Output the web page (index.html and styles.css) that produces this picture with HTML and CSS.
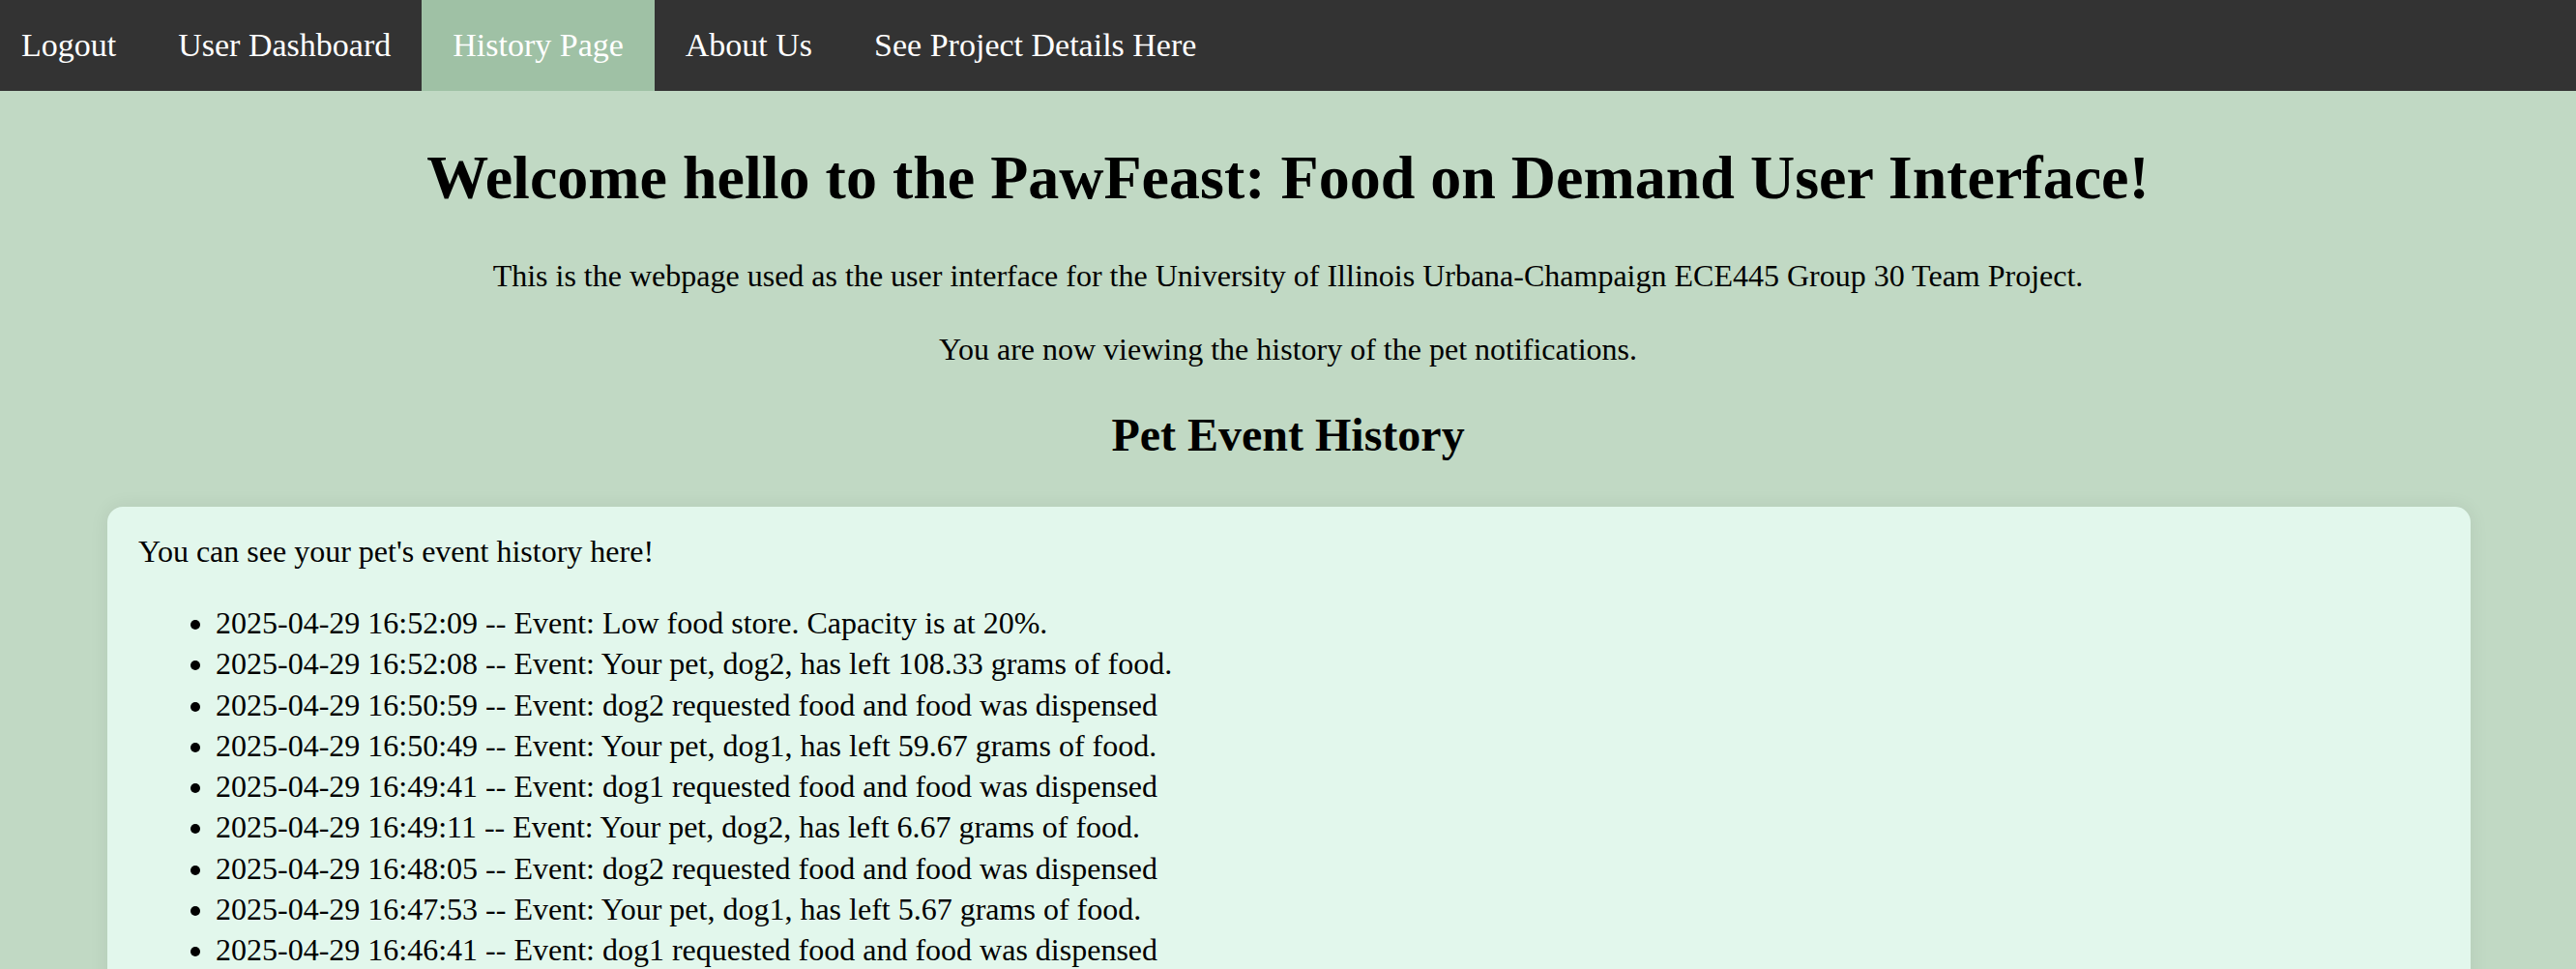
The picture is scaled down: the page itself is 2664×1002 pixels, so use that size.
FILE: index.html
```html
<!DOCTYPE html>
<html lang="en">
<head>
<meta charset="utf-8">
<title>PawFeast History</title>
<link rel="stylesheet" href="styles.css">
</head>
<body>
<nav class="topnav">
  <a class="nav-link nav-first" href="#">Logout</a>
  <a class="nav-link" href="#">User Dashboard</a>
  <a class="nav-link active" href="#">History Page</a>
  <a class="nav-link" href="#">About Us</a>
  <a class="nav-link" href="#">See Project Details Here</a>
</nav>
<main class="content">
  <h1 class="title">Welcome hello to the PawFeast: Food on Demand User Interface!</h1>
  <p class="intro">This is the webpage used as the user interface for the University of Illinois Urbana-Champaign ECE445 Group 30 Team Project.</p>
  <p class="intro">You are now viewing the history of the pet notifications.</p>
  <h2 class="subtitle">Pet Event History</h2>
  <section class="card">
    <p class="card-lead">You can see your pet's event history here!</p>
    <ul class="events">
      <li>2025-04-29 16:52:09 -- Event: Low food store. Capacity is at 20%.</li>
      <li>2025-04-29 16:52:08 -- Event: Your pet, dog2, has left 108.33 grams of food.</li>
      <li>2025-04-29 16:50:59 -- Event: dog2 requested food and food was dispensed</li>
      <li>2025-04-29 16:50:49 -- Event: Your pet, dog1, has left 59.67 grams of food.</li>
      <li>2025-04-29 16:49:41 -- Event: dog1 requested food and food was dispensed</li>
      <li>2025-04-29 16:49:11 -- Event: Your pet, dog2, has left 6.67 grams of food.</li>
      <li>2025-04-29 16:48:05 -- Event: dog2 requested food and food was dispensed</li>
      <li>2025-04-29 16:47:53 -- Event: Your pet, dog1, has left 5.67 grams of food.</li>
      <li>2025-04-29 16:46:41 -- Event: dog1 requested food and food was dispensed</li>
    </ul>
  </section>
</main>
</body>
</html>
```

FILE: styles.css
```css
html, body {
  margin: 0;
  padding: 0;
}

body {
  background: #c1d9c4;
  font-family: "Liberation Serif", "Times New Roman", serif;
  font-size: 32px;
  color: #000;
}

.topnav {
  display: flex;
  background: #333333;
}

.nav-link {
  display: block;
  padding: 28px 32px;
  font-size: 34px;
  color: #ffffff;
  text-decoration: none;
}

.nav-first {
  padding-left: 22px;
}

.nav-link.active {
  background: #9fc1a5;
}

.content {
  padding-top: 10px;
  text-align: center;
}

.title {
  font-size: 64px;
  font-weight: bold;
  margin: 43px 0 43px;
}

.intro {
  line-height: 42px;
  margin: 34px 0;
}

.subtitle {
  font-size: 48px;
  font-weight: bold;
  margin: 40px 0 47px;
}

.card {
  text-align: left;
  background: #e2f7ec;
  border-radius: 16px;
  margin: 0 109px 40px 111px;
  padding: 25px 32px 32px;
  box-shadow: 0 0 20px rgba(0, 0, 0, 0.07);
}

.card-lead {
  margin: 0;
  line-height: 42px;
}

.events {
  margin: 32px 0 0;
  padding-left: 80px;
  line-height: 42.25px;
}
```
